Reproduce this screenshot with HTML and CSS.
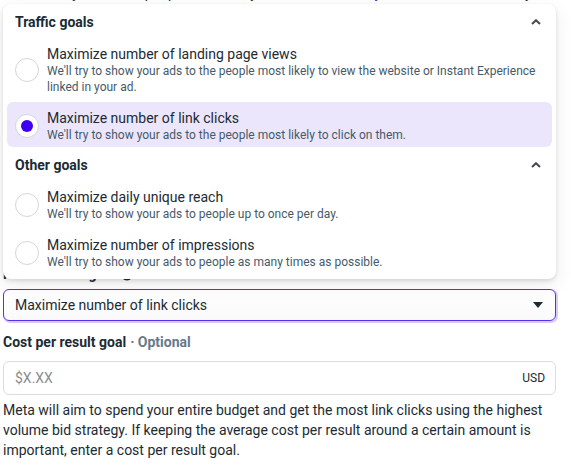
FILE: index.html
```html
<!DOCTYPE html>
<html lang="en">
<head>
<meta charset="utf-8">
<title>Performance goal</title>
<link rel="stylesheet" href="styles.css">
</head>
<body>
<div class="page">
  <p class="behind">We'll show your ads to people most likely to <span class="link">click on links in your ad</span>, based on activity.</p>
  <div class="covered"></div>
  <div class="field-label">Performance goal <svg class="info" width="14" height="14" viewBox="0 0 14 14"><circle cx="7" cy="7" r="6.5" fill="#1c2b33"/><rect x="6.2" y="6" width="1.6" height="4.5" fill="#fff"/><circle cx="7" cy="4.2" r="0.9" fill="#fff"/></svg></div>
  <div class="select">
    <span>Maximize number of link clicks</span>
    <svg class="caret" width="10" height="6" viewBox="0 0 10 6"><path d="M0 0 H10 L5 6 Z" fill="#1c2b33"/></svg>
  </div>
  <div class="field-label second">Cost per result goal <span class="optional">· Optional</span></div>
  <div class="input">
    <span class="placeholder">$X.XX</span>
    <span class="currency">USD</span>
  </div>
  <p class="help">Meta will aim to spend your entire budget and get the most link clicks using the highest volume bid strategy. If keeping the average cost per result around a certain amount is important, enter a cost per result goal.</p>

  <div class="menu">
    <div class="group-head">
      <span>Traffic goals</span>
      <svg class="chev" width="10" height="6" viewBox="0 0 10 6"><path d="M1 5 L5 1.2 L9 5" fill="none" stroke="#444950" stroke-width="2"/></svg>
    </div>
    <div class="options">
      <div class="option">
        <span class="radio"></span>
        <div class="texts">
          <div class="title">Maximize number of landing page views</div>
          <div class="desc">We'll try to show your ads to the people most likely to view the website or Instant Experience linked in your ad.</div>
        </div>
      </div>
      <div class="option selected">
        <span class="radio on"></span>
        <div class="texts">
          <div class="title">Maximize number of link clicks</div>
          <div class="desc">We'll try to show your ads to the people most likely to click on them.</div>
        </div>
      </div>
    </div>
    <div class="group-head">
      <span>Other goals</span>
      <svg class="chev" width="10" height="6" viewBox="0 0 10 6"><path d="M1 5 L5 1.2 L9 5" fill="none" stroke="#444950" stroke-width="2"/></svg>
    </div>
    <div class="options">
      <div class="option">
        <span class="radio"></span>
        <div class="texts">
          <div class="title">Maximize daily unique reach</div>
          <div class="desc">We'll try to show your ads to people up to once per day.</div>
        </div>
      </div>
      <div class="option">
        <span class="radio"></span>
        <div class="texts">
          <div class="title">Maximize number of impressions</div>
          <div class="desc">We'll try to show your ads to people as many times as possible.</div>
        </div>
      </div>
    </div>
  </div>
</div>
</body>
</html>
```

FILE: styles.css
```css
* { box-sizing: border-box; }
html, body { margin: 0; padding: 0; background: #fff; }
body {
  font-family: Roboto, "Liberation Sans", Arial, sans-serif;
  color: #1c2b33;
  font-size: 14px;
}
.page {
  position: relative;
  display: flow-root;
  width: 553px;
  margin-left: 3px;
}
.behind {
  margin: -17px 0 0 0;
  line-height: 20px;
  color: #1c2b33;
  white-space: nowrap;
  overflow: hidden;
}
.behind .link { color: #3b2bd8; }
.covered { height: 261px; }
.field-label {
  font-weight: 700;
  line-height: 20px;
  display: flex;
  align-items: center;
  gap: 4px;
}
.field-label .info { display: block; }
.field-label.second { margin-top: 11px; }
.optional { color: #67788a; font-weight: 700; }
.select {
  margin-top: 5px;
  height: 32px;
  border: 1px solid #5b2cf0;
  border-radius: 6px;
  box-shadow: 1px 1px 0 1px #d7cbfb;
  padding: 0 12px 0 11px;
  display: flex;
  align-items: center;
  justify-content: space-between;
  background: linear-gradient(#fff, #fafafa);
}
.caret { display: block; }
.input {
  margin-top: 9px;
  height: 34px;
  border: 1px solid #dadde1;
  border-radius: 6px;
  padding: 0 10px 0 11px;
  display: flex;
  align-items: center;
  justify-content: space-between;
}
.placeholder { color: #8a8d91; }
.currency { font-size: 12px; }
.help {
  margin: 5px 0 0 0;
  line-height: 20px;
  color: #1c2b33;
}
.menu {
  position: absolute;
  top: 4px;
  left: 0;
  width: 553px;
  background: #fff;
  border-radius: 8px;
  box-shadow: 0 2px 4px rgba(0,0,0,0.12), 0 6px 20px rgba(0,0,0,0.08);
  padding-bottom: 5px;
}
.group-head {
  display: flex;
  align-items: center;
  justify-content: space-between;
  padding: 8px 15px 6px 12px;
  line-height: 20px;
  font-weight: 700;
  color: #1c2b33;
}
.chev { display: block; }
.options {
  display: flex;
  flex-direction: column;
  gap: 3px;
  padding: 0 4px;
}
.option {
  display: flex;
  align-items: center;
  gap: 8px;
  padding: 7px 8px 4px 8px;
  border-radius: 6px;
}
.option.selected { background: #ebe6fc; }
.radio {
  flex: none;
  width: 24px;
  height: 24px;
  border-radius: 50%;
  border: 1px solid #d4d6da;
  background: #fff;
  display: flex;
  align-items: center;
  justify-content: center;
}
.radio.on::after {
  content: "";
  width: 12px;
  height: 12px;
  border-radius: 50%;
  background: #4000f0;
}
.texts { flex: 1; }
.title { line-height: 18px; color: #1c2b33; }
.desc { font-size: 12px; line-height: 16px; color: #465a69; }
```
